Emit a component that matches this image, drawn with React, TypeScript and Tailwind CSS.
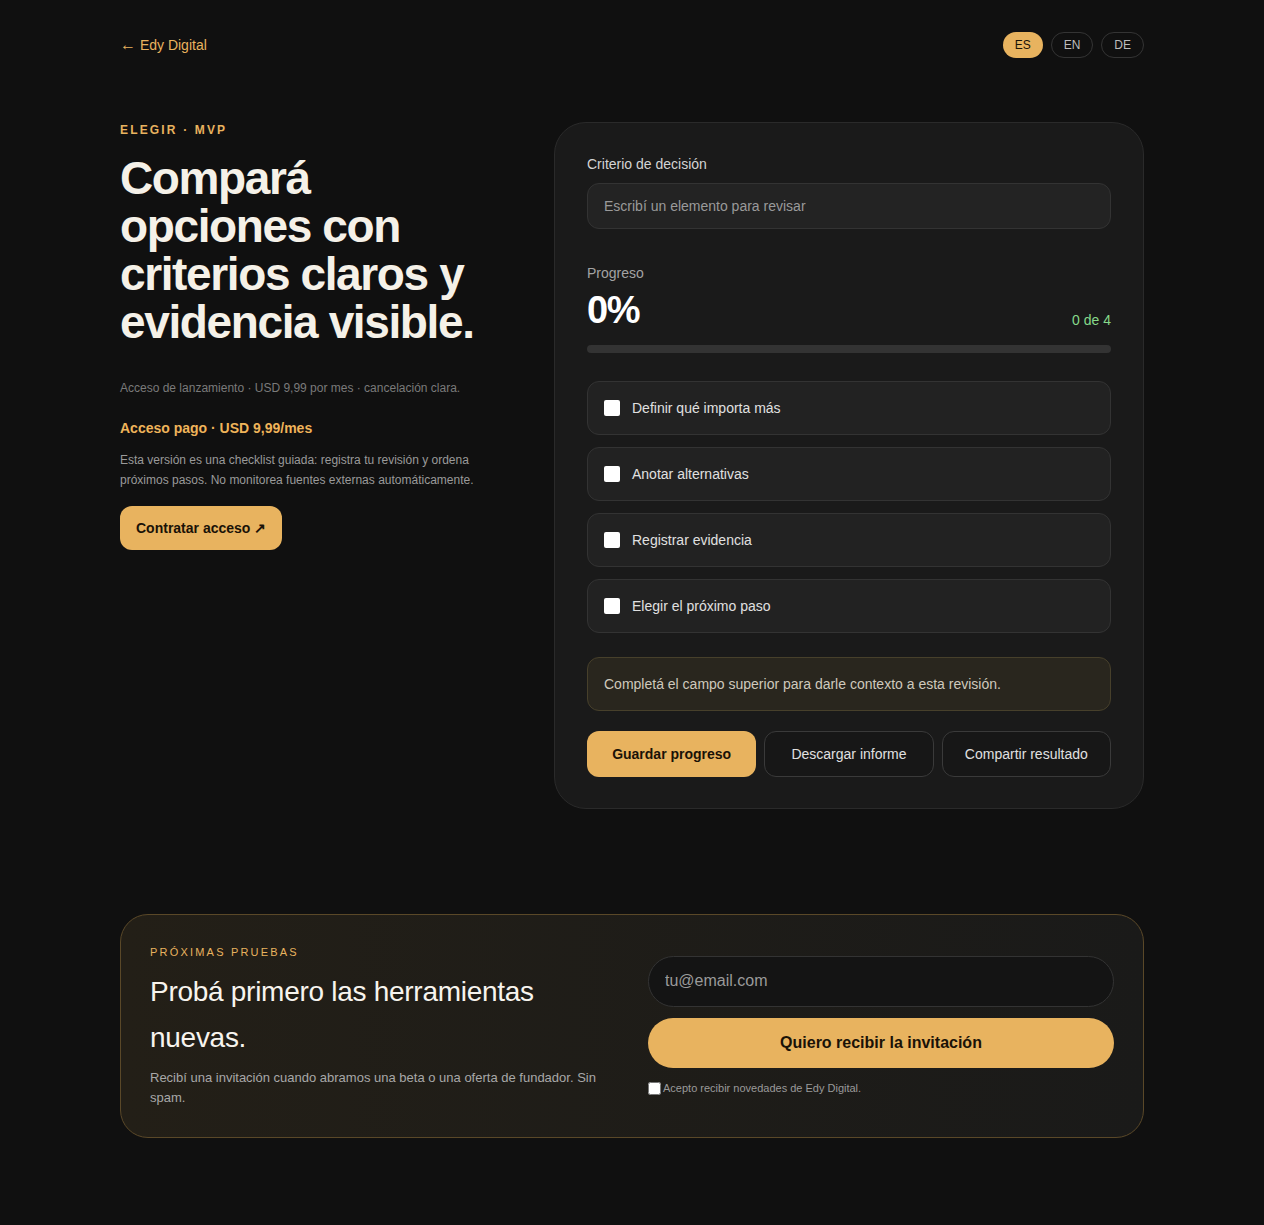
import { useState } from 'react';

const steps = [
  'Definir qué importa más',
  'Anotar alternativas',
  'Registrar evidencia',
  'Elegir el próximo paso',
];

const langs = ['ES', 'EN', 'DE'];

export default function App() {
  const [lang, setLang] = useState('ES');
  const [criterio, setCriterio] = useState('');
  const [done, setDone] = useState<boolean[]>([false, false, false, false]);

  const doneCount = done.filter(Boolean).length;
  const pct = Math.round((doneCount / steps.length) * 100);

  const toggle = (i: number) => {
    setDone(prev => prev.map((v, idx) => (idx === i ? !v : v)));
  };

  return (
    <div className="min-h-screen bg-[#101010] font-['Liberation_Sans',Arial,sans-serif] text-[#e5e5e5]">
      <div className="mx-auto w-[1024px] pt-8 pb-[87px]">
        {/* Header */}
        <header className="flex items-center justify-between">
          <a href="#" className="text-sm text-[#e8b35f]">
            <span className="text-base">←</span> Edy Digital
          </a>
          <div className="flex gap-2">
            {langs.map(l => (
              <button
                key={l}
                onClick={() => setLang(l)}
                className={
                  l === lang
                    ? 'h-[26px] rounded-full bg-[#e8b35f] px-3 text-xs text-[#1a1207]'
                    : 'h-[26px] rounded-full border border-[#343434] px-3 text-xs text-[#bdbdbd]'
                }
              >
                {l}
              </button>
            ))}
          </div>
        </header>

        {/* Hero */}
        <section className="mt-16 grid grid-cols-[386px_1fr] gap-12">
          <div>
            <p className="text-xs leading-4 font-bold tracking-[0.18em] text-[#e8b35f]">
              ELEGIR · MVP
            </p>
            <h1 className="mt-4 max-w-[372px] text-[46px] leading-[48px] font-bold tracking-[-0.03em] text-[#f5f1e8]">
              Compará opciones con criterios claros y evidencia visible.
            </h1>
            <p className="mt-[34px] text-xs leading-4 text-[#7a7a7a]">
              Acceso de lanzamiento · USD 9,99 por mes · cancelación clara.
            </p>
            <p className="mt-[22px] text-sm leading-5 font-bold text-[#efb45a]">
              Acceso pago · USD 9,99/mes
            </p>
            <p className="mt-3 text-xs leading-5 text-[#9a9a9a]">
              Esta versión es una checklist guiada: registra tu revisión y ordena próximos pasos. No monitorea fuentes externas automáticamente.
            </p>
            <button className="mt-4 h-11 rounded-xl bg-[#e8b35f] px-4 text-sm font-bold text-[#1a1207]">
              Contratar acceso ↗
            </button>
          </div>

          {/* Checklist card */}
          <div className="rounded-[32px] border border-[#2a2a2a] bg-[#1a1a1a] px-8 pt-[31px] pb-[31px]">
            <label className="block text-sm leading-5 text-[#d4d4d4]">Criterio de decisión</label>
            <input
              value={criterio}
              onChange={e => setCriterio(e.target.value)}
              placeholder="Escribí un elemento para revisar"
              className="mt-[9px] h-[46px] w-full rounded-xl border border-[#333333] bg-[#232323] px-4 text-sm text-[#e5e5e5] outline-none placeholder:text-[#9a9a9a]"
            />

            <p className="mt-[34px] text-sm leading-5 text-[#a3a3a3]">Progreso</p>
            <div className="mt-[7px] flex items-end justify-between">
              <span className="text-[38px] leading-[40px] font-bold tracking-[-0.04em] text-white">{pct}%</span>
              <span className="text-sm leading-5 text-[#86d98a]">
                {doneCount} de {steps.length}
              </span>
            </div>
            <div className="mt-[15px] h-2 w-full rounded-full bg-[#333333]">
              <div className="h-2 rounded-full bg-[#e8b35f]" style={{ width: `${pct}%` }} />
            </div>

            <div className="mt-[28px] flex flex-col gap-3">
              {steps.map((s, i) => (
                <label
                  key={s}
                  className="flex h-[54px] cursor-pointer items-center gap-3 rounded-xl border border-[#333333] bg-[#222222] px-4 text-sm text-[#e0e0e0]"
                >
                  <input
                    type="checkbox"
                    checked={done[i]}
                    onChange={() => toggle(i)}
                    className="h-4 w-4 appearance-none rounded-[2px] bg-white checked:bg-[#e8b35f]"
                  />
                  {s}
                </label>
              ))}
            </div>

            <div className="mt-6 flex h-[54px] items-center rounded-xl border border-[#47402b] bg-[#29261e] px-4 text-sm text-[#cfc9bc]">
              Completá el campo superior para darle contexto a esta revisión.
            </div>

            <div className="mt-5 grid grid-cols-3 gap-2">
              <button className="h-[46px] rounded-xl bg-[#e8b35f] text-sm font-bold text-[#1a1207]">
                Guardar progreso
              </button>
              <button className="h-[46px] rounded-xl border border-[#3a3a3a] bg-[#171717] text-sm text-[#e0e0e0]">
                Descargar informe
              </button>
              <button className="h-[46px] rounded-xl border border-[#3a3a3a] bg-[#171717] text-sm text-[#e0e0e0]">
                Compartir resultado
              </button>
            </div>
          </div>
        </section>

        {/* Waitlist */}
        <section className="mt-[105px] grid grid-cols-2 items-center gap-8 rounded-[28px] border border-[#5a4828] bg-gradient-to-r from-[#231f17] to-[#1a1a19] p-[29px]">
          <div>
            <p className="text-[11px] leading-4 tracking-[0.2em] text-[#e8b35f]">PRÓXIMAS PRUEBAS</p>
            <h2 className="mt-[9px] text-[28px] leading-[46px] tracking-[-0.01em] text-[#f7f4ee]">
              Probá primero las herramientas nuevas.
            </h2>
            <p className="mt-[7px] text-[13px] leading-5 text-[#a8a8a8]">
              Recibí una invitación cuando abramos una beta o una oferta de fundador. Sin spam.
            </p>
          </div>
          <form onSubmit={e => e.preventDefault()}>
            <input
              type="email"
              placeholder="tu@email.com"
              className="h-[51px] w-full rounded-full border border-[#333333] bg-[#141414] px-4 text-base text-[#e5e5e5] outline-none placeholder:text-[#9a9a9a]"
            />
            <button className="mt-[11px] h-[50px] w-full rounded-full bg-[#e8b35f] text-base font-bold text-[#1a1207]">
              Quiero recibir la invitación
            </button>
            <label className="mt-3 flex items-center gap-[2px] text-[11px] text-[#9a9a9a]">
              <input type="checkbox" className="h-[13px] w-[13px]" />
              Acepto recibir novedades de Edy Digital.
            </label>
          </form>
        </section>
      </div>
    </div>
  );
}
